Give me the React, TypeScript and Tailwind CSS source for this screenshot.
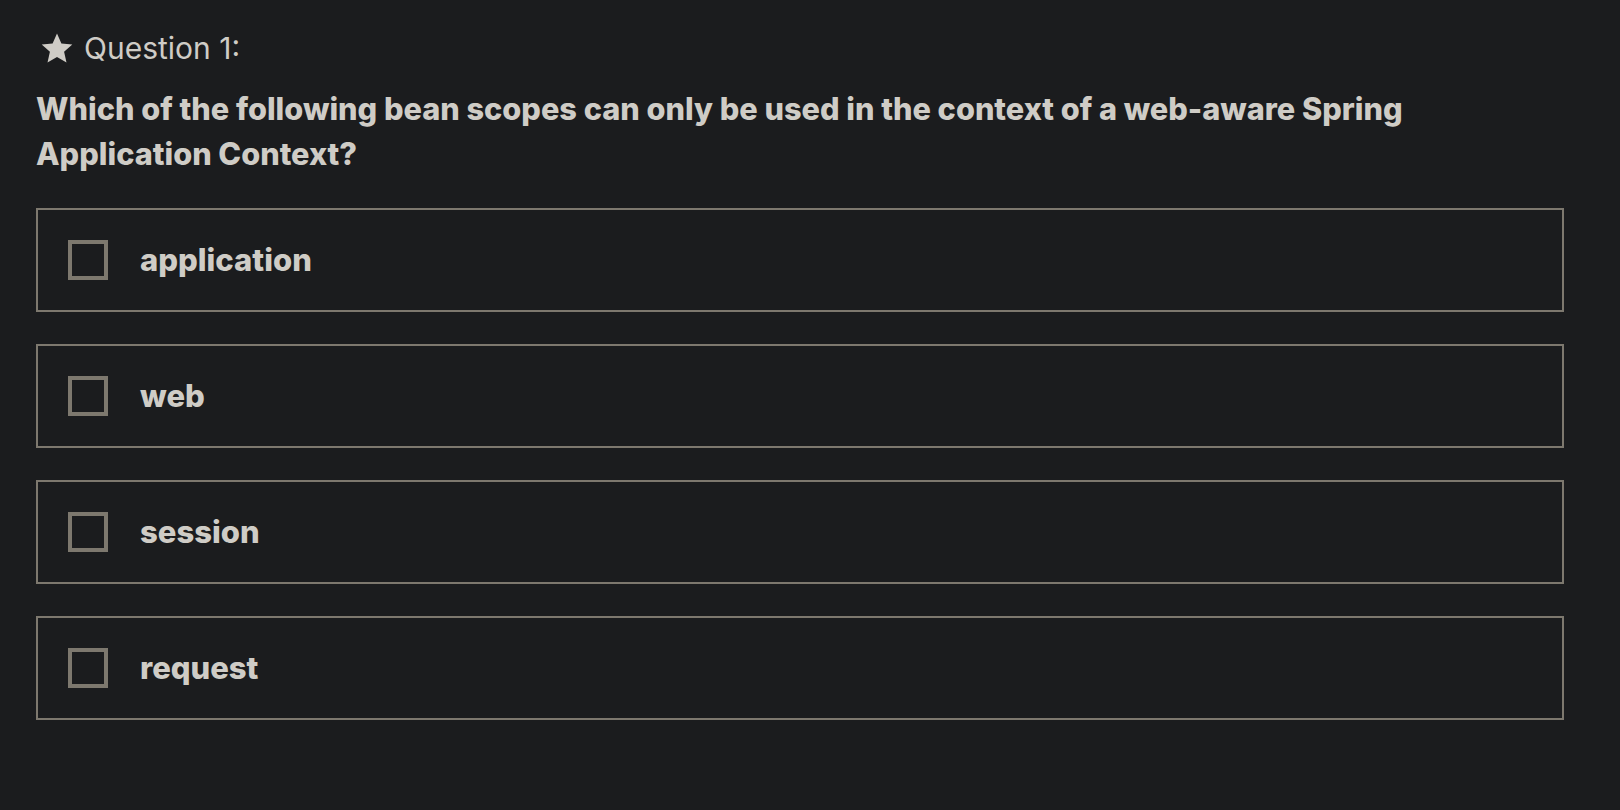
import React from "react";

const options = ["application", "web", "session", "request"];

export default function App() {
  return (
    <div className="w-[1620px] h-[810px] bg-[#1b1c1e] text-[#cfccc6] px-[36px] pt-[26px]" style={{ fontFamily: "Inter, 'Liberation Sans', sans-serif" }}>
      <div className="flex items-center gap-[10px] pl-[4px]">
        <svg width="34" height="34" viewBox="0 0 24 24" fill="#cfccc6">
          <path d="M12 1.8l3.1 7.1 7.7.7-5.8 5.1 1.7 7.6L12 18.3l-6.7 4 1.7-7.6-5.8-5.1 7.7-.7z" />
        </svg>
        <span className="text-[30px] leading-[44px] font-normal">Question 1:</span>
      </div>
      <div className="mt-[16px] text-[30.7px] leading-[45px] font-extrabold max-w-[1420px]">
        Which of the following bean scopes can only be used in the context of a web-aware Spring Application Context?
      </div>
      <div className="mt-[32px] flex flex-col gap-[32px] w-[1528px]">
        {options.map((o) => (
          <div key={o} className="h-[104px] border-2 border-[#7d786e] flex items-center pl-[30px]">
            <div className="w-[40px] h-[40px] border-[4px] border-[#7d786e] shrink-0" />
            <span className="ml-[32px] text-[31px] font-extrabold">{o}</span>
          </div>
        ))}
      </div>
    </div>
  );
}
